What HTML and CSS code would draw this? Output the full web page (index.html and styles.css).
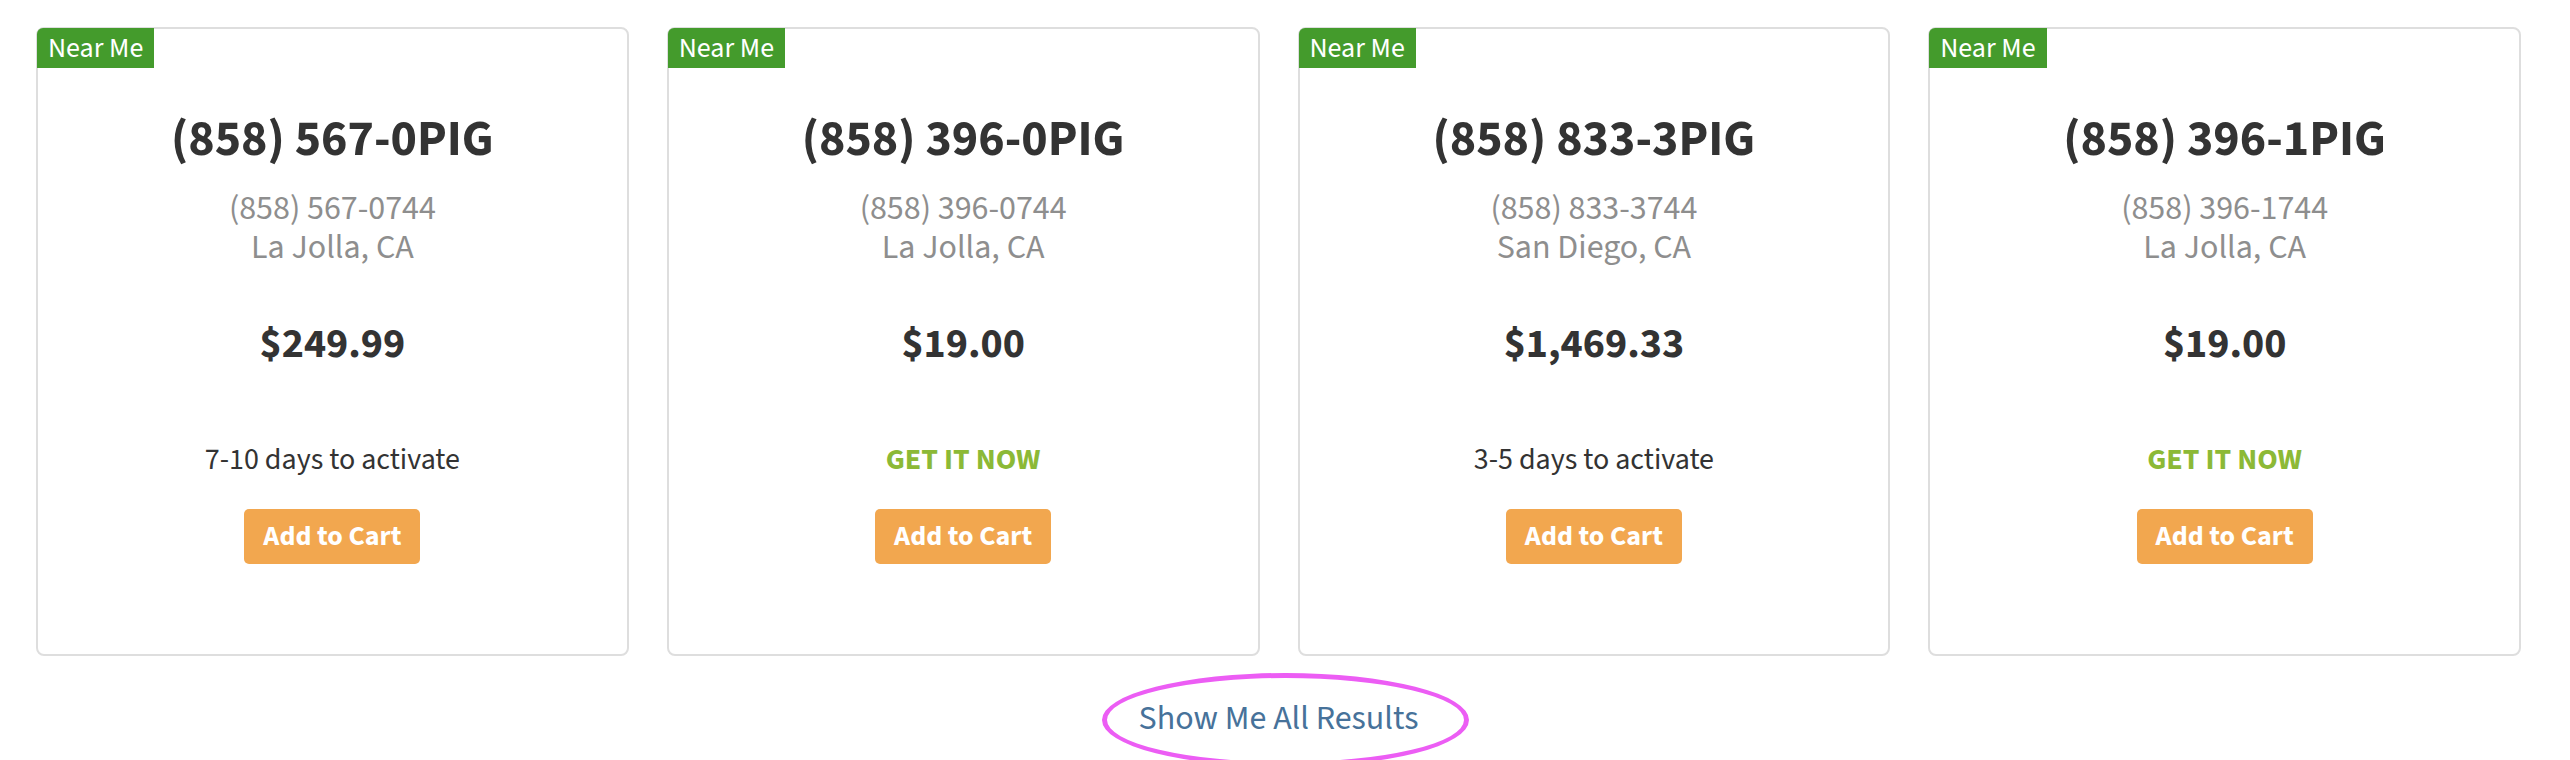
FILE: index.html
```html
<!DOCTYPE html>
<html lang="en">
<head>
<meta charset="utf-8">
<title>Numbers Near Me</title>
<link rel="stylesheet" href="styles.css">
</head>
<body>
<div class="page">
  <div class="cards">
    <div class="card">
      <span class="badge">Near Me</span>
      <div class="vanity">(858) 567-0PIG</div>
      <div class="sub">(858) 567-0744<br>La Jolla, CA</div>
      <div class="price">$249.99</div>
      <div class="avail">7-10 days to activate</div>
      <button class="cart">Add to Cart</button>
    </div>
    <div class="card">
      <span class="badge">Near Me</span>
      <div class="vanity">(858) 396-0PIG</div>
      <div class="sub">(858) 396-0744<br>La Jolla, CA</div>
      <div class="price">$19.00</div>
      <div class="avail now">GET IT NOW</div>
      <button class="cart">Add to Cart</button>
    </div>
    <div class="card">
      <span class="badge">Near Me</span>
      <div class="vanity">(858) 833-3PIG</div>
      <div class="sub">(858) 833-3744<br>San Diego, CA</div>
      <div class="price">$1,469.33</div>
      <div class="avail">3-5 days to activate</div>
      <button class="cart">Add to Cart</button>
    </div>
    <div class="card">
      <span class="badge">Near Me</span>
      <div class="vanity">(858) 396-1PIG</div>
      <div class="sub">(858) 396-1744<br>La Jolla, CA</div>
      <div class="price">$19.00</div>
      <div class="avail now">GET IT NOW</div>
      <button class="cart">Add to Cart</button>
    </div>
  </div>
  <div class="more">
    <a class="more-link" href="#">Show Me All Results</a>
  </div>
</div>
</body>
</html>
```
FILE: styles.css
```css
* { box-sizing: border-box; }
html, body { margin: 0; padding: 0; background: #fff; }
body {
  font-family: "Source Sans Pro", "Source Sans 3", Lato, "Open Sans", sans-serif;
  color: #333;
  min-height: 760px;
}
.page {
  padding: 27px 49px 21px 36px;
}
.cards {
  display: grid;
  grid-template-columns: repeat(4, 1fr);
  column-gap: 38px;
}
.card {
  position: relative;
  border: 2px solid #dedede;
  border-radius: 8px;
  padding: 81px 10px 90px;
  display: flex;
  flex-direction: column;
  align-items: center;
  text-align: center;
}
.badge {
  position: absolute;
  top: -1px;
  left: -1px;
  height: 40px;
  padding: 0 11px;
  background: #449b2c;
  color: #fff;
  font-size: 28px;
  line-height: 40px;
  border-top-left-radius: 6px;
}
.vanity {
  font-size: 50px;
  font-weight: 700;
  line-height: 60px;
  color: #333;
}
.sub {
  margin-top: 19px;
  font-size: 34px;
  line-height: 39px;
  color: #8e8e8e;
}
.price {
  margin-top: 52px;
  font-size: 42px;
  font-weight: 700;
  line-height: 50px;
  color: #333;
}
.avail {
  margin-top: 73px;
  font-size: 30px;
  line-height: 36px;
  color: #333;
}
.avail.now {
  color: #8cb936;
  font-weight: 700;
}
.cart {
  margin-top: 31px;
  height: 55px;
  padding: 0 19px;
  border: 0;
  border-radius: 5px;
  background: #f2a74f;
  color: #fff;
  font-family: inherit;
  font-size: 28px;
  font-weight: 700;
  line-height: 55px;
  cursor: pointer;
}
.more {
  padding-top: 43px;
  text-align: center;
  line-height: 40px;
}
.more-link {
  position: relative;
  display: inline-block;
  vertical-align: top;
  font-size: 34px;
  line-height: 40px;
  color: #47729a;
  text-decoration: none;
}
.more-link::after {
  content: "";
  position: absolute;
  left: -37px;
  top: -26px;
  width: calc(100% + 78px);
  height: 84px;
  border: 5px solid #ec5df4;
  border-radius: 50%;
  filter: blur(0.6px);
  pointer-events: none;
}
```
